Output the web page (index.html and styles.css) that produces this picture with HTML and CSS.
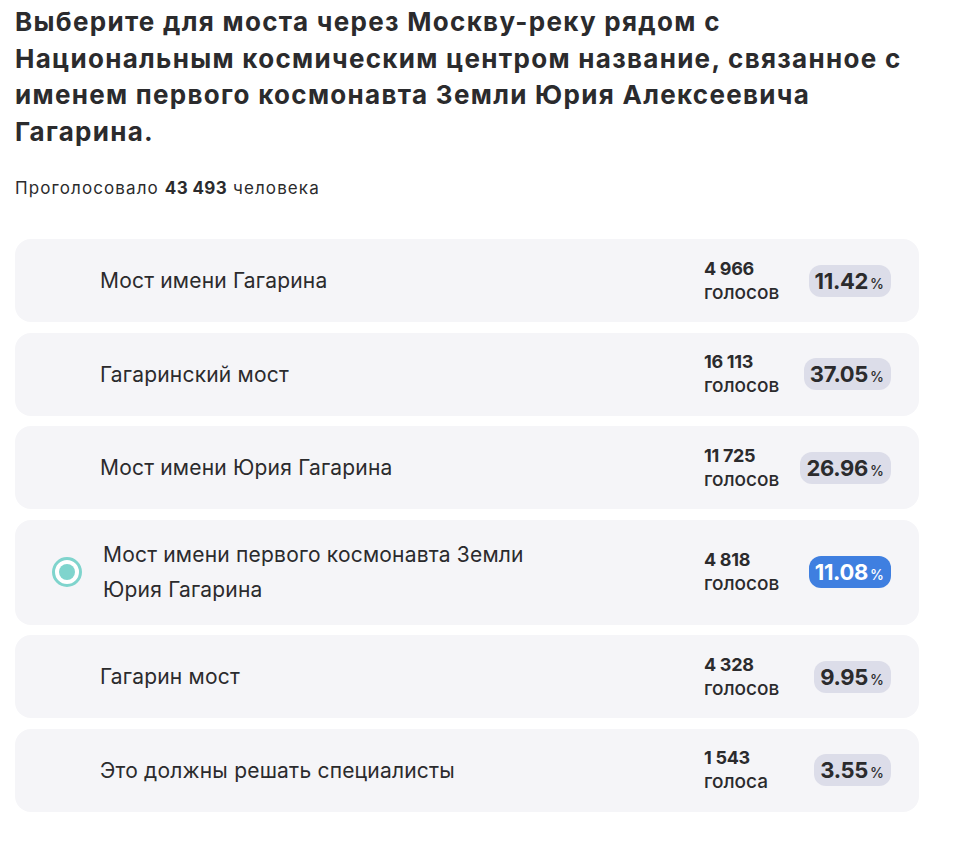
FILE: index.html
```html
<!DOCTYPE html>
<html lang="ru">
<head>
<meta charset="utf-8">
<link rel="stylesheet" href="styles.css">
</head>
<body>
<main class="poll">
  <h1 class="title">Выберите для моста через Москву-реку рядом с Национальным космическим центром название, связанное с именем первого космонавта Земли Юрия Алексеевича Гагарина.</h1>
  <p class="total">Проголосовало <b>43 493</b> человека</p>
  <ul class="options">
    <li class="option">
      <span class="radio-slot"></span>
      <span class="label">Мост имени Гагарина</span>
      <span class="votes"><b>4 966</b><span>голосов</span></span>
      <span class="pct-slot"><span class="pct">11.42<small>%</small></span></span>
    </li>
    <li class="option">
      <span class="radio-slot"></span>
      <span class="label">Гагаринский мост</span>
      <span class="votes"><b>16 113</b><span>голосов</span></span>
      <span class="pct-slot"><span class="pct">37.05<small>%</small></span></span>
    </li>
    <li class="option">
      <span class="radio-slot"></span>
      <span class="label">Мост имени Юрия Гагарина</span>
      <span class="votes"><b>11 725</b><span>голосов</span></span>
      <span class="pct-slot"><span class="pct">26.96<small>%</small></span></span>
    </li>
    <li class="option selected">
      <span class="radio-slot"><span class="radio"></span></span>
      <span class="label">Мост имени первого космонавта Земли<br>Юрия Гагарина</span>
      <span class="votes"><b>4 818</b><span>голосов</span></span>
      <span class="pct-slot"><span class="pct">11.08<small>%</small></span></span>
    </li>
    <li class="option">
      <span class="radio-slot"></span>
      <span class="label">Гагарин мост</span>
      <span class="votes"><b>4 328</b><span>голосов</span></span>
      <span class="pct-slot"><span class="pct">9.95<small>%</small></span></span>
    </li>
    <li class="option">
      <span class="radio-slot"></span>
      <span class="label">Это должны решать специалисты</span>
      <span class="votes"><b>1 543</b><span>голоса</span></span>
      <span class="pct-slot"><span class="pct">3.55<small>%</small></span></span>
    </li>
  </ul>
</main>
</body>
</html>
```

FILE: styles.css
```css
* { box-sizing: border-box; }
html, body { margin: 0; padding: 0; background: #fff; }
body {
  font-family: "Inter", "Noto Sans", sans-serif;
  color: #2b2b2d;
}
.poll {
  padding: 4px 35px 0 15px;
}
.title {
  margin: 0;
  font-size: 26px;
  line-height: 36.5px;
  font-weight: 700;
  letter-spacing: 1.3px;
  max-width: 904px;
}
.total {
  margin: 28px 0 0;
  font-size: 17px;
  line-height: 20px;
  letter-spacing: 1.1px;
}
.total b { font-weight: 700; letter-spacing: 0.4px; }
.options {
  list-style: none;
  margin: 41px 0 0;
  padding: 0;
  display: flex;
  flex-direction: column;
  gap: 10.5px;
  width: 904px;
}
.option {
  display: flex;
  align-items: center;
  min-height: 83px;
  padding: 14px 28px 14px 37px;
  background: #f5f5f8;
  border-radius: 16px;
}
.option.selected { min-height: 105px; }
.radio-slot {
  flex: 0 0 30px;
  width: 30px;
  height: 30px;
  margin-right: 18px;
  display: flex;
  align-items: center;
  justify-content: center;
}
.selected .radio-slot { margin-right: 21px; }
.radio {
  width: 30px;
  height: 30px;
  border-radius: 50%;
  border: 3px solid #7fd4cd;
  background: #fff;
  display: flex;
  align-items: center;
  justify-content: center;
}
.radio::after {
  content: "";
  width: 16px;
  height: 16px;
  border-radius: 50%;
  background: #7fd4cd;
}
.label {
  flex: 1;
  font-size: 21px;
  line-height: 35px;
  letter-spacing: 0.2px;
}
.votes {
  flex: 0 0 90px;
  display: flex;
  flex-direction: column;
  font-size: 19px;
  line-height: 24px;
  font-weight: 500;
}
.votes b {
  font-size: 18px;
  font-weight: 700;
  letter-spacing: -0.3px;
}
.pct-slot {
  flex: 0 0 97px;
  display: flex;
  justify-content: flex-end;
}
.pct {
  display: inline-flex;
  align-items: baseline;
  gap: 2px;
  height: 32px;
  line-height: 32px;
  padding: 0 7px 0 6px;
  border-radius: 12px;
  background: #dcdde9;
  font-size: 22px;
  font-weight: 700;
  letter-spacing: -0.3px;
}
.pct small {
  font-size: 14px;
  font-weight: 500;
  letter-spacing: 0;
}
.selected .pct {
  background: #3f7fe0;
  color: #fff;
}
```
